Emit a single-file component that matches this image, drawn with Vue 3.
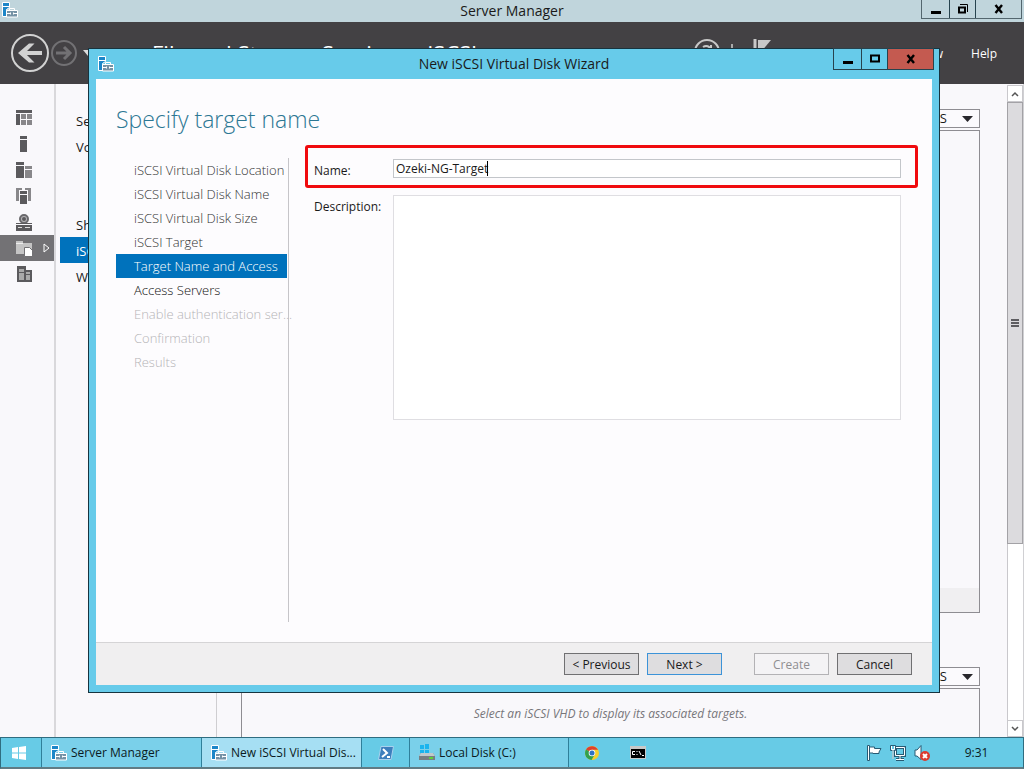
<script setup>
import { ref } from 'vue'

const name = ref('Ozeki-NG-Target')
const description = ref('')

const rail = ['dashboard', 'local', 'servers', 'group', 'storage', 'files', 'other']

const steps = [
  { label: 'iSCSI Virtual Disk Location' },
  { label: 'iSCSI Virtual Disk Name' },
  { label: 'iSCSI Virtual Disk Size' },
  { label: 'iSCSI Target' },
  { label: 'Target Name and Access', state: 'active' },
  { label: 'Access Servers', state: 'upcoming' },
  { label: 'Enable authentication ser...', state: 'disabled' },
  { label: 'Confirmation', state: 'disabled' },
  { label: 'Results', state: 'disabled' },
]
</script>

<template>
  <div class="desktop">
    <svg class="defs" width="0" height="0" aria-hidden="true">
      <symbol id="server-icon" viewBox="0 0 16 16">
        <path d="M.5.5h7v5l-3 2v7h-4z" fill="#1c86c8" stroke="#fff" />
        <path d="M1 4.500h6" stroke="#fff" />
        <path d="M4.500 8.500h11v6.500h-11z" fill="#7592a5" stroke="#fff" />
        <path d="M7.500 8V6.500h5V8M5 11.500h3m4 0h3M8.500 10.500v2m3-2v2" fill="none" stroke="#fff" />
      </symbol>
    </svg>

    <header class="titlebar">
      <svg class="app-icon" width="16" height="16"><use href="#server-icon" /></svg>
      <h1>Server Manager</h1>
      <div class="controls main-controls">
        <button aria-label="Minimize"><svg width="12" height="12"><path d="M1 8h10v3H1z" /></svg></button>
        <button aria-label="Restore">
          <svg width="12" height="12" fill="none" stroke="#000"><path d="M2 4.500h6v5H2z" stroke-width="2" /><path d="M3 1.500h7.500V9" /></svg>
        </button>
        <button class="close" aria-label="Close"><svg width="12" height="12"><path d="M2.500 2l6.500 8m0-8l-6.500 8" stroke="#000" stroke-width="2.400" /></svg></button>
      </div>
    </header>

    <div class="banner">
      <button class="nav-btn" aria-label="Back">
        <svg width="38" height="38" fill="none" stroke="#d2d2d2"><circle cx="19" cy="19" r="18" stroke-width="2" /><path d="M31 19H10" stroke-width="4" /><path d="M18 9.500h5.500L14 19l9.500 9.500H18L7 19z" fill="#d2d2d2" stroke="none" /></svg>
      </button>
      <button class="nav-btn" aria-label="Forward">
        <svg width="26" height="26" fill="none" stroke="#727174"><circle cx="13" cy="13" r="12" stroke-width="2" /><path d="M5 13h14M13 7l6 6-6 6" stroke-width="3" /></svg>
      </button>
      <svg class="nav-caret" width="10" height="6"><path d="M0 0h10L5 6z" fill="#ddd" /></svg>
      <span class="crumb">File and Storage Services ▸ iSCSI</span>
      <div class="banner-tools">
        <svg width="80" height="28" fill="none" stroke="#c8c8c8"><circle cx="13" cy="13" r="12" stroke-width="2" /><path d="M9 8c3-2 7-1 8 3M17 6v5h-5" stroke-width="2" /><path d="M38 5v16" stroke="#aaa" stroke-width="2" /><path d="M61 0v26" stroke-width="3" /><path d="M64 1h13L66 14h-2z" fill="#c8c8c8" stroke="none" /></svg>
      </div>
      <nav class="menus"><a href="#">View</a><a href="#">Help</a></nav>
    </div>

    <main class="workspace">
      <nav class="rail" aria-label="Server groups">
        <a v-for="r in rail" :key="r" href="#" :aria-label="r" :class="{ current: r === 'files' }">
          <svg width="16" height="17" fill="#5b5a5d">
            <template v-if="r === 'dashboard'">
              <path d="M0 0h16v3H0z" /><path d="M0 4h4v11H0z" /><path d="M5 4h5v5H5zM11 4h5v5h-5zM5 10h5v5H5zM11 10h5v5h-5z" fill="#88878a" />
            </template>
            <path v-else-if="r === 'local'" d="M4 0h7v3H4zM4 4h7v12H4z" />
            <template v-else-if="r === 'servers'">
              <path d="M0 0h8v3H0zM0 4h8v12H0z" /><path d="M9 4h7v3H9zM9 8h7v8H9z" fill="#88878a" />
            </template>
            <template v-else-if="r === 'group'">
              <path d="M0 0h6v3H4v10H0zM9 0h6v13h-4V3H9z" fill="#88878a" /><path d="M3 2h9v15H3z" fill="#f9f8fb" /><path d="M4 3h7v3H4zM4 7h7v9H4z" />
            </template>
            <template v-else-if="r === 'storage'">
              <circle cx="8" cy="5" r="4" fill="#b5b4b7" stroke="#6a696c" stroke-width="2" /><circle cx="8" cy="5" r="2" /><path d="M0 9h16v8H0z" /><path d="M0 10.500h16" stroke="#f9f8fb" /><path d="M2 13.500h4M9 13.500h5" stroke="#ddd" />
            </template>
            <template v-else-if="r === 'files'">
              <path d="M0 1h7v2h9v11H0z" fill="#c4c4c4" /><path d="M0 3.500h7" stroke="#eee" /><path d="M8.500 7.500h5l3 3v6h-8z" fill="#fff" stroke="#727174" />
            </template>
            <template v-else>
              <path d="M1 0h9v4h6v12H1z" /><path d="M3 3h5v3H3zM3 7h5v7H3zM10 6h4v2h-4zM10 9h4v5h-4z" fill="#aaa" />
            </template>
          </svg>
          <svg v-if="r === 'files'" class="expand" width="7" height="10"><path d="M1 1l5 4-5 4z" fill="none" stroke="#fff" /></svg>
        </a>
      </nav>

      <nav class="side" aria-label="File and storage services">
        <a href="#">Servers</a>
        <a href="#">Volumes</a>
        <a class="shares" href="#">Shares</a>
        <a class="selected" href="#">iSCSI</a>
        <a href="#">Work Folders</a>
      </nav>

      <section class="content">
        <div class="picker">
          <select aria-label="Virtual disk tasks"><option>TASKS</option></select>
          <svg width="11" height="6"><path d="M0 0h11L5.500 6z" fill="#28272c" /></svg>
        </div>
        <div class="panel disks"><div class="panel-foot"></div></div>
        <div class="picker">
          <select aria-label="Target tasks"><option>TASKS</option></select>
          <svg width="11" height="6"><path d="M0 0h11L5.500 6z" fill="#28272c" /></svg>
        </div>
        <div class="panel targets"><p>Select an iSCSI VHD to display its associated targets.</p></div>
      </section>

      <div class="scroll" aria-hidden="true">
        <div class="arrow"><svg width="8" height="6"><path d="M1 5l3-3 3 3" fill="none" stroke="#555" stroke-width="1.500" /></svg></div>
        <div class="thumb"><i></i><i></i><i></i></div>
        <div class="track"></div>
        <div class="arrow"><svg width="8" height="6"><path d="M1 1l3 3 3-3" fill="none" stroke="#555" stroke-width="1.500" /></svg></div>
      </div>
    </main>

    <footer class="taskbar">
      <button class="start" aria-label="Start">
        <svg width="14" height="14" fill="#fff"><path d="M0 2l6-1v5.500H0zM7 1l7-1v6.500H7zM0 7.500h6V13l-6-1zM7 7.500h7V14l-7-1z" /></svg>
      </button>
      <button class="task open"><svg width="16" height="16"><use href="#server-icon" /></svg>Server Manager</button>
      <button class="task front"><svg width="16" height="16"><use href="#server-icon" /></svg>New iSCSI Virtual Dis...</button>
      <button class="pin" aria-label="PowerShell">
        <svg width="16" height="14"><path d="M3 .5h12.500l-2.500 13H.5z" fill="#3d7fbd" stroke="#a9d2ee" /><path d="M5 3l4 4-5 4M9 11h3" fill="none" stroke="#fff" stroke-width="2" /></svg>
      </button>
      <button class="task open disk">
        <svg width="16" height="17"><path d="M1 1h4v4H1zM6 0h4v5H6zM1 6h4v3H1zM6 6h4v3H6z" fill="#19b4ee" /><path d="M2 9h12l2 3v4H0v-4z" fill="#777f83" /><path d="M2 9h12l2 3H0z" fill="#c0c9cc" /><path d="M10 14h4" stroke="#5fd03c" stroke-width="2" /></svg>Local Disk (C:)</button>
      <button class="pin" aria-label="Chrome">
        <svg width="14" height="14" viewBox="0 0 14 14"><circle cx="7" cy="7" r="7" fill="#f7cf2d" /><path d="M7 7L1 3.500A7 7 0 0 1 13.100 3.800H7z" fill="#dd4030" /><path d="M1 3.500A7 7 0 0 0 6.500 14L9.500 9 7 7z" fill="#32a04e" /><circle cx="7" cy="7" r="3.300" fill="#fff" /><circle cx="7" cy="7" r="2.500" fill="#2f72c4" /></svg>
      </button>
      <button class="pin" aria-label="Command Prompt">
        <svg width="16" height="13"><path d="M0 0h16v13H0z" fill="#c8c8c8" /><path d="M1 3h14v9H1z" /><path d="M5 5.500H2.500v3H5M7 5v1m0 2v1M9 5l2 4M12 9.500h2" fill="none" stroke="#fff" /></svg>
      </button>
      <div class="tray">
        <svg width="16" height="16"><path d="M1.500 15.500V.5h2v15zM3.500 2h5v1.500h6.500l-2 3.500 0 1.500h-6V8h-3.500z" fill="#fff" stroke="#285b74" /></svg>
        <svg width="16" height="16" fill="none"><path d="M5.500 2.500h9v8h-9zM10 11v3M6 14.500h8" stroke="#285b74" stroke-width="3" /><path d="M5.500 2.500h9v8h-9zM10 11v3M6 14.500h8" stroke="#fff" /><path d="M.5.500h5v5h-5zM3 6v8" fill="#67cbe8" stroke="#285b74" /><path d="M1.500 1v3.500h3V1M3 5v9" stroke="#fff" /></svg>
        <svg width="16" height="16"><path d="M1 5h2l4-4.500v14L3 11H1z" fill="#fff" stroke="#285b74" /><circle cx="11" cy="11" r="5" fill="#dc3b2e" /><path d="M9 9l4 4m0-4l-4 4" stroke="#fff" stroke-width="2" /></svg>
      </div>
      <time>9:31</time>
    </footer>

    <section class="wizard" role="dialog" aria-labelledby="wizard-title">
      <header class="wizard-bar">
        <svg class="app-icon" width="16" height="16"><use href="#server-icon" /></svg>
        <h2 id="wizard-title">New iSCSI Virtual Disk Wizard</h2>
        <div class="controls">
          <button aria-label="Minimize"><svg width="12" height="12"><path d="M1 8h10v3H1z" /></svg></button>
          <button aria-label="Maximize"><svg width="12" height="12"><path d="M2 2.500h8v6H2z" fill="none" stroke="#000" stroke-width="2" /></svg></button>
          <button class="close red" aria-label="Close"><svg width="12" height="12"><path d="M2.500 2l6.500 8m0-8l-6.500 8" stroke="#000" stroke-width="2.400" /></svg></button>
        </div>
      </header>
      <div class="wizard-page">
        <h3>Specify target name</h3>
        <div class="columns">
          <ol class="steps">
            <li v-for="s in steps" :key="s.label" :class="s.state">{{ s.label }}</li>
          </ol>
          <form class="form" @submit.prevent>
            <div class="row marked">
              <label for="target-name">Name:</label>
              <div class="field">
                <input id="target-name" v-model="name" type="text" />
                <span class="text-caret"></span>
              </div>
            </div>
            <div class="row">
              <label for="target-desc">Description:</label>
              <div class="field"><textarea id="target-desc" v-model="description"></textarea></div>
            </div>
          </form>
        </div>
      </div>
      <div class="wizard-foot">
        <button>&lt; Previous</button>
        <button class="next">Next &gt;</button>
        <button class="create" disabled>Create</button>
        <button>Cancel</button>
      </div>
    </section>
  </div>
</template>

<style>
body { margin: 0; }
</style>

<style scoped>
* { box-sizing: border-box; }
.desktop {
  position: relative;
  display: flex;
  flex-direction: column;
  height: 100vh;
  overflow: hidden;
  background: #f9f8fb;
  color: #1a1a1a;
  font-family: "Open Sans", "Noto Sans", sans-serif;
  font-size: 12px;
}
.defs { position: absolute; }
button, input, textarea, select { font: inherit; color: inherit; border-radius: 0; }
button { display: flex; align-items: center; justify-content: center; padding: 0; border: 0; background: none; }
a { color: inherit; text-decoration: none; }
h1, h2, h3, p, ol { margin: 0; padding: 0; font-weight: 400; }
svg { display: block; flex: none; }

.titlebar {
  position: relative;
  display: flex;
  flex: none;
  justify-content: center;
  height: 22px;
  background: #c0d5dc;
}
h1, h2 { font-size: 14px; line-height: 22px; }
.titlebar .app-icon { position: absolute; left: 2px; top: 2px; }
.controls {
  position: absolute;
  top: 0;
  right: 5px;
  display: flex;
  height: 22px;
  border: 1px solid #27434e;
}
.controls button { width: 27px; }
.controls button + button { width: 26px; border-left: 1px solid #27434e; }
.controls button.close { width: 46px; }
.controls button.red { background: #c45a50; }
.main-controls { right: 2px; height: 19px; border-top: 0; border-color: #53666e; }

.banner {
  display: flex;
  flex: none;
  align-items: center;
  height: 62px;
  padding: 0 27px 0 11px;
  background: #434144;
  color: #fff;
}
.nav-btn + .nav-btn { margin-left: 2px; }
.nav-caret { margin-left: 6px; }
.crumb { flex: 1; margin-left: 59px; font-size: 22px; white-space: nowrap; }
.banner-tools { margin-right: 143px; }
.menus { display: flex; gap: 28px; }

.workspace { display: flex; flex: 1; min-height: 0; }
.rail { width: 56px; flex: none; padding-top: 21px; border-right: 2px solid #d9d8db; }
.rail a { position: relative; display: flex; align-items: center; height: 26px; padding-left: 16px; }
.rail a.current { background: #737275; }
.expand { margin-left: 11px; }
.side { width: 161px; flex: none; padding: 23px 0 0 4px; border-right: 1px solid #cfced1; font-size: 13px; }
.side a { display: block; height: 26px; padding-left: 16px; line-height: 28px; }
.side .shares { margin-top: 52px; }
.side .selected { background: #0072bc; color: #fff; }
.content { display: flex; flex: 1; flex-direction: column; padding: 25px 27px 0 24px; }
.picker { position: relative; align-self: flex-end; flex: none; height: 19px; }
.picker select {
  width: 90px;
  height: 19px;
  padding: 0 32px 0 0;
  border: 1px solid #8e8d92;
  background: #fbfafd;
  font-size: 13px;
  line-height: 17px;
  text-align: right;
  text-align-last: right;
  appearance: none;
}
.picker svg { position: absolute; right: 7px; top: 7px; pointer-events: none; }
.panel { margin-top: 2px; border: 1px solid #8e8d92; }
.disks { display: flex; flex: 1; flex-direction: column; justify-content: flex-end; margin-bottom: 54px; }
.panel-foot { height: 24px; background: #f0eff1; }
.targets { height: 49px; flex: none; border-bottom: 0; color: #77767a; font-style: italic; line-height: 49px; text-align: center; }

.scroll { display: flex; width: 17px; flex: none; flex-direction: column; padding-top: 1px; border-right: 1px solid #d0d0d3; }
.arrow { display: flex; align-items: center; justify-content: center; height: 17px; flex: none; border: 1px solid #c9c8cc; background: #fff; }
.thumb { display: flex; flex: 442; flex-direction: column; align-items: center; justify-content: center; gap: 1px; border: 1px solid #a3a2a6; background: #dcdbde; }
.thumb i { width: 8px; height: 2px; background: #5e5d61; }
.track { flex: 177; border-left: 1px solid #c9c8cc; background: #fff; }

.taskbar {
  display: flex;
  flex: none;
  height: 32px;
  border: 1px solid #2f6d80;
  border-bottom: 2px solid #607b84;
  background: #67cbe6;
  color: #0b1a22;
}
.taskbar .start { width: 40px; padding-right: 4px; }
.task { width: 160px; justify-content: flex-start; gap: 4px; padding-left: 9px; border: solid #2f7f9a; border-width: 0 0 0 1px; }
.task.open { background: #7ad0ea; }
.task.front { background: #a6dff3; }
.taskbar .pin { width: 46px; }
.task.front + .pin { width: 48px; border-left: 1px solid #2f7f9a; }
.task.disk { border-right-width: 1px; }
.tray { display: flex; align-items: center; gap: 8px; margin-left: auto; }
time { width: 93px; line-height: 29px; text-align: center; }

.wizard {
  position: absolute;
  top: 48px;
  right: 84px;
  bottom: 76px;
  left: 88px;
  display: flex;
  flex-direction: column;
  padding: 0 7px 7px;
  border: 1px solid #17343f;
  background: #67cbea;
}
.wizard-bar { position: relative; display: flex; flex: none; justify-content: center; height: 30px; padding-top: 4px; }
.wizard-bar .app-icon { position: absolute; left: 2px; top: 7px; }
.wizard-bar .controls { top: -1px; right: -2px; }
.wizard-page { display: flex; flex: 1; flex-direction: column; padding: 24px 14px 20px 20px; background: #fdfcfe; }
h3 { color: #2c7793; font-size: 23px; font-weight: 300; line-height: 32px; }
.columns { display: flex; flex: 1; align-items: stretch; margin-top: 10px; }
.steps {
  width: 173px;
  flex: none;
  margin-top: 13px;
  padding-right: 1px;
  border-right: 1px solid #c6c5c9;
  color: #333;
  font-size: 13px;
  font-weight: 300;
  list-style: none;
}
.steps li { height: 24px; padding-left: 18px; line-height: 24px; white-space: nowrap; }
.steps .active { background: #0072bc; color: #fff; }
.steps .upcoming { color: #111; }
.steps .disabled { color: #b5b4b7; }
.form { flex: 1; margin-left: 16px; }
.row { display: flex; padding: 0 14px 0 6px; border: 3px solid transparent; }
.row label { width: 79px; flex: none; line-height: 24px; }
.row.marked { height: 43px; padding-top: 11px; border-color: #f00a0e; border-radius: 3px; }
.field { position: relative; display: flex; flex: 1; }
.row + .row { padding-top: 4px; }
.row input { width: 100%; height: 19px; padding: 0 2px; border: 1px solid #c3c6ca; background: #fff; outline: 0; }
.text-caret { position: absolute; top: 2px; left: 94px; width: 1px; height: 15px; background: #000; }
.row textarea { width: 100%; height: 225px; border: 1px solid #dfdee2; background: #fff; resize: none; }

.wizard-foot { display: flex; flex: none; align-items: center; justify-content: flex-end; gap: 8px; height: 43px; padding-right: 20px; border-top: 1px solid #d5d4d6; background: #f0eff0; }
.wizard-foot button { width: 75px; height: 22px; border: 1px solid #707072; background: #dedddf; }
.wizard-foot .next { border-color: #3c93d8; }
.wizard-foot .create { margin-left: 24px; border-color: #b3b2b5; background: #f4f3f5; color: #8f8e91; }
</style>
